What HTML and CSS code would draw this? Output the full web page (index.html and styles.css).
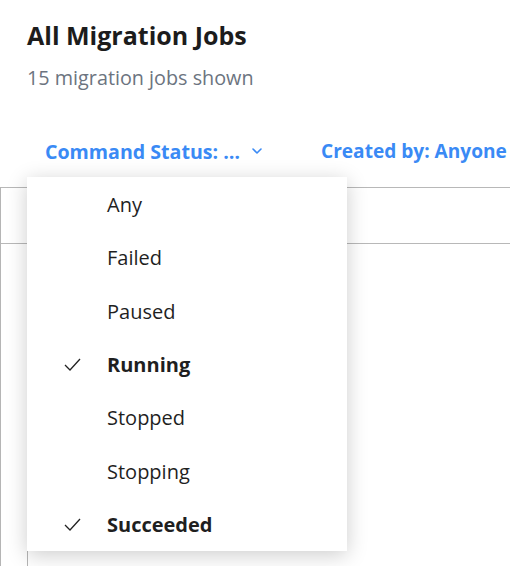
FILE: index.html
```html
<!DOCTYPE html>
<html>
<head>
  <title>All Migration Jobs</title>
  <link rel="stylesheet" href="styles.css">
</head>
<body>
  <div class="page">
    <div class="page-header">
      <h1>All Migration Jobs</h1>
      <p class="count">15 migration jobs shown</p>
    </div>

    <div class="filters">
      <div class="filter">
        <button class="filter-toggle">Command Status: …
          <svg class="chevron" width="10" height="6" viewBox="0 0 10 6"><path d="M1 1l4 4 4-4" fill="none" stroke="currentColor" stroke-width="1.6" stroke-linecap="round" stroke-linejoin="round"/></svg>
        </button>
        <ul class="menu">
          <li class="menu-item"><span class="check"></span>Any</li>
          <li class="menu-item"><span class="check"></span>Failed</li>
          <li class="menu-item"><span class="check"></span>Paused</li>
          <li class="menu-item selected"><span class="check"><svg width="17" height="13" viewBox="0 0 17 13"><path d="M1 7l5 5L16 1" fill="none" stroke="currentColor" stroke-width="1.3"/></svg></span>Running</li>
          <li class="menu-item"><span class="check"></span>Stopped</li>
          <li class="menu-item"><span class="check"></span>Stopping</li>
          <li class="menu-item selected"><span class="check"><svg width="17" height="13" viewBox="0 0 17 13"><path d="M1 7l5 5L16 1" fill="none" stroke="currentColor" stroke-width="1.3"/></svg></span>Succeeded</li>
        </ul>
      </div>
      <button class="filter-toggle">Created by: Anyone</button>
    </div>

    <div class="jobs">
      <div class="job-row"></div>
      <div class="job-row">
        <div class="job-cell"></div>
      </div>
    </div>
  </div>
</body>
</html>
```

FILE: styles.css
```css
body {
  margin: 0;
  font-family: "Open Sans", "Noto Sans", sans-serif;
  color: #1f1f1f;
  background: #fff;
}
.page {
  width: 510px;
  height: 566px;
  overflow: hidden;
}
.page-header {
  padding: 18px 27px 0;
}
h1 {
  margin: 0;
  font-size: 25px;
  font-weight: 700;
  line-height: 34px;
  color: #1c1c1c;
}
.count {
  margin: 14px 0 0;
  font-size: 19.8px;
  line-height: 24px;
  color: #6c7480;
}
.filters {
  display: flex;
  gap: 41px;
  padding: 46px 0 0 27px;
  height: 51px;
}
.filter {
  position: relative;
}
.filter-toggle {
  display: flex;
  align-items: center;
  gap: 12px;
  border: 0;
  background: none;
  padding: 0 18px;
  height: 30px;
  font-family: inherit;
  font-size: 19.6px;
  font-weight: 700;
  color: #3a8af5;
  cursor: pointer;
  white-space: nowrap;
}
.filters > .filter-toggle {
  padding: 0;
  font-size: 19.1px;
}
.menu {
  position: absolute;
  top: 41px;
  left: 0;
  z-index: 2;
  width: 320px;
  margin: 0;
  padding: 0;
  list-style: none;
  background: #fff;
  box-shadow: 0 4px 20px rgba(0, 0, 0, 0.2);
}
.menu-item {
  display: flex;
  align-items: center;
  height: 53.3px;
  font-size: 20px;
  color: #1f1f1f;
}
.menu-item:first-child {
  padding-top: 1px;
}
.menu-item.selected {
  font-weight: 700;
}
.check {
  display: flex;
  width: 80px;
  padding-left: 37px;
  box-sizing: border-box;
  color: #222;
}
.jobs {
  border-left: 1px solid #b5b5b5;
  height: 400px;
}
.job-row {
  height: 55px;
  border-top: 1px solid #b8b8b8;
}
.job-cell {
  margin-left: 26px;
  height: 340px;
  border-left: 1px solid #b5b5b5;
}
```
